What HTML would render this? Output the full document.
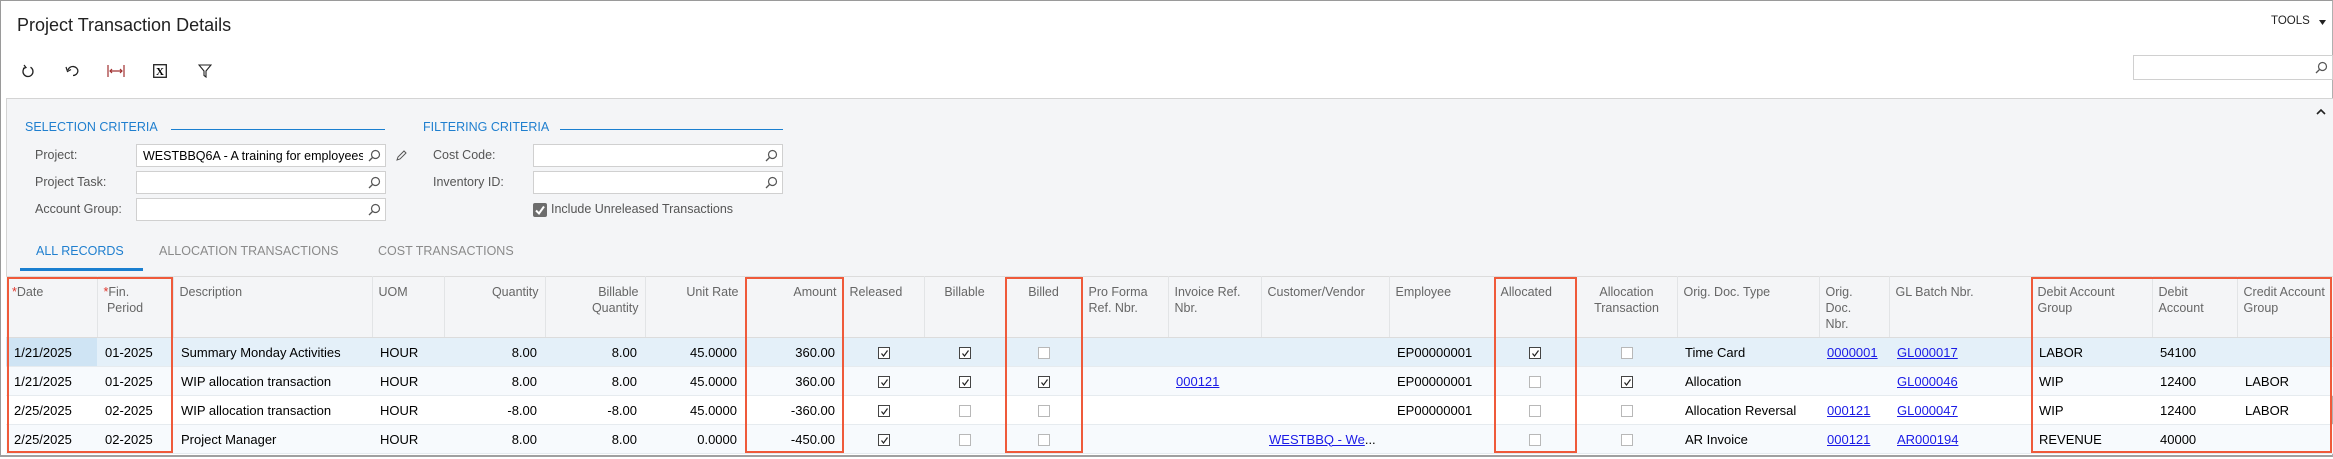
<!DOCTYPE html>
<html><head><meta charset="utf-8">
<style>
*{box-sizing:border-box;margin:0;padding:0}
body{width:2333px;height:459px;background:#fff;font-family:"Liberation Sans",Arial,sans-serif;font-size:13px;color:#000;position:relative;overflow:hidden}
.abs{position:absolute}
.frame{position:absolute;left:0;top:0;width:2333px;height:457px;border-left:1px solid #9a9a9a;border-top:1px solid #9a9a9a;border-bottom:2px solid #a0a0a0;border-right:1px solid #b0b0b0}
.title{left:17px;top:15px;font-size:18px;color:#222}
.tools{left:2271px;top:15px;font-size:11.5px;color:#222}
.panel{left:6px;top:98px;width:2327px;height:178px;background:#f4f5f7;border-top:1px solid #d4d4d4;border-left:1px solid #d4d4d4}
.sec{font-size:12.5px;color:#1f7fcf;top:120px}
.secline{height:1px;background:#1a7fd0;top:129px}
.lbl{color:#555;font-size:12.5px}
.inp{background:#fff;border:1px solid #d0d0d0;height:23px}
.inp .mg{position:absolute;right:4px;top:4px}
.tab{top:244px;font-size:12.5px;color:#8a8a8a}
table{position:absolute;left:6px;top:276px;border-collapse:collapse;table-layout:fixed;width:2327px}
th{height:61px;background:#f4f5f7;color:#666;font-weight:normal;font-size:12.5px;text-align:left;vertical-align:top;padding:7px 6px 0 6px;line-height:16px;border-right:1px solid #e2e4e6;border-top:1px solid #dcdcdc;border-bottom:1px solid #dcdcdc}
td{height:29px;padding:0 8px;white-space:nowrap;overflow:hidden;border-bottom:1px solid #e6ebef}
.r{text-align:right}
.c{text-align:center}
tr.sel td{background:#e4f0f9}
tr.sel td.d{background:#cfe4f4}
tr.alt td{background:#f7fafd}
a{color:#1a1ae6;text-decoration:underline}
.red{position:absolute;border:2px solid #ef5a3a;top:277px;height:176px}
.star{color:#e0352b}
.cb{display:inline-block;width:12px;height:12px;border:1px solid #b8b8b8;background:#fff;vertical-align:middle;position:relative}
.cb.on{border-color:#444}
.cb.on svg{position:absolute;left:1px;top:1px}
</style></head><body>
<div class="frame"></div>
<div class="abs title">Project Transaction Details</div>
<div class="abs tools">TOOLS</div>
<svg class="abs" style="left:2319px;top:20px" width="7" height="5" viewBox="0 0 7 5"><path d="M0 0 H7 L3.5 5 Z" fill="#222"/></svg>

<svg class="abs" style="left:21px;top:64px" width="14" height="15" viewBox="0 0 14 15"><path d="M4 3.5 A5 5 0 1 0 9.5 3.2" fill="none" stroke="#222" stroke-width="1.3"/><path d="M3 1 L5 3.6 L2 4.5" fill="none" stroke="#222" stroke-width="1.2"/></svg>
<svg class="abs" style="left:65px;top:65px" width="14" height="12" viewBox="0 0 14 12"><path d="M3 5 A5 4.5 0 1 1 8 10.5" fill="none" stroke="#222" stroke-width="1.3"/><path d="M1 2 L2.5 6.5 L6 4.5" fill="none" stroke="#222" stroke-width="1.2"/></svg>
<svg class="abs" style="left:107px;top:64px" width="18" height="14" viewBox="0 0 18 14"><path d="M1 1 V13 M17 1 V13 M3 7 H15 M5 5 L3 7 L5 9 M13 5 L15 7 L13 9" fill="none" stroke="#a03030" stroke-width="1.2"/></svg>
<svg class="abs" style="left:153px;top:64px" width="14" height="14" viewBox="0 0 14 14"><rect x="0.7" y="0.7" width="12.6" height="12.6" fill="#fff" stroke="#222" stroke-width="1.3"/><text x="7" y="11" font-family="Liberation Serif" font-weight="bold" font-size="11" text-anchor="middle">X</text></svg>
<svg class="abs" style="left:198px;top:64px" width="14" height="14" viewBox="0 0 14 14"><path d="M1 1 H13 L8 7 V13 L6 11.5 V7 Z" fill="none" stroke="#222" stroke-width="1.1"/></svg>

<div class="abs inp" style="left:2133px;top:55px;width:200px;height:25px"><svg class="mg" style="top:5px" width="13" height="13" viewBox="0 0 13 13"><circle cx="7.5" cy="5.5" r="4" fill="none" stroke="#555" stroke-width="1.2"/><path d="M4.5 8.5 L1 12" stroke="#555" stroke-width="1.3"/></svg></div>

<div class="abs panel"></div>
<svg class="abs" style="left:2316px;top:108px" width="10" height="7" viewBox="0 0 10 7"><path d="M1 6 L5 2 L9 6" fill="none" stroke="#222" stroke-width="1.6"/></svg>

<div class="abs sec" style="left:25px">SELECTION CRITERIA</div>
<div class="abs secline" style="left:171px;width:214px"></div>
<div class="abs sec" style="left:423px">FILTERING CRITERIA</div>
<div class="abs secline" style="left:560px;width:223px"></div>

<div class="abs lbl" style="left:35px;top:148px">Project:</div>
<div class="abs lbl" style="left:35px;top:175px">Project Task:</div>
<div class="abs lbl" style="left:35px;top:202px">Account Group:</div>
<div class="abs inp" style="left:136px;top:144px;width:250px"><span style="position:absolute;left:6px;top:4px;font-size:12.5px;width:220px;overflow:hidden;white-space:nowrap">WESTBBQ6A - A training for employees</span><svg class="mg" width="13" height="13" viewBox="0 0 13 13"><circle cx="7.5" cy="5.5" r="4" fill="none" stroke="#555" stroke-width="1.2"/><path d="M4.5 8.5 L1 12" stroke="#555" stroke-width="1.3"/></svg></div>
<div class="abs inp" style="left:136px;top:171px;width:250px"><svg class="mg" width="13" height="13" viewBox="0 0 13 13"><circle cx="7.5" cy="5.5" r="4" fill="none" stroke="#555" stroke-width="1.2"/><path d="M4.5 8.5 L1 12" stroke="#555" stroke-width="1.3"/></svg></div>
<div class="abs inp" style="left:136px;top:198px;width:250px"><svg class="mg" width="13" height="13" viewBox="0 0 13 13"><circle cx="7.5" cy="5.5" r="4" fill="none" stroke="#555" stroke-width="1.2"/><path d="M4.5 8.5 L1 12" stroke="#555" stroke-width="1.3"/></svg></div>
<svg class="abs" style="left:395px;top:150px" width="12" height="12" viewBox="0 0 12 12"><path d="M2 10 L3 7 L9 1 L11 3 L5 9 Z" fill="none" stroke="#555" stroke-width="1"/></svg>

<div class="abs lbl" style="left:433px;top:148px">Cost Code:</div>
<div class="abs lbl" style="left:433px;top:175px">Inventory ID:</div>
<div class="abs inp" style="left:533px;top:144px;width:250px"><svg class="mg" width="13" height="13" viewBox="0 0 13 13"><circle cx="7.5" cy="5.5" r="4" fill="none" stroke="#555" stroke-width="1.2"/><path d="M4.5 8.5 L1 12" stroke="#555" stroke-width="1.3"/></svg></div>
<div class="abs inp" style="left:533px;top:171px;width:250px"><svg class="mg" width="13" height="13" viewBox="0 0 13 13"><circle cx="7.5" cy="5.5" r="4" fill="none" stroke="#555" stroke-width="1.2"/><path d="M4.5 8.5 L1 12" stroke="#555" stroke-width="1.3"/></svg></div>
<svg class="abs" style="left:533px;top:203px" width="14" height="14" viewBox="0 0 14 14"><rect width="14" height="14" rx="2" fill="#6d6d6d"/><path d="M3 7.5 L6 10.5 L11 3.5" fill="none" stroke="#fff" stroke-width="2"/></svg>
<div class="abs lbl" style="left:551px;top:202px">Include Unreleased Transactions</div>

<div class="abs tab" style="left:36px;color:#1f7fcf">ALL RECORDS</div>
<div class="abs" style="left:20px;top:268px;width:123px;height:3px;background:#1a7fd0"></div>
<div class="abs tab" style="left:159px">ALLOCATION TRANSACTIONS</div>
<div class="abs tab" style="left:378px">COST TRANSACTIONS</div>

<table>
<colgroup>
<col style="width:91px"><col style="width:76px"><col style="width:199px"><col style="width:72px"><col style="width:101px"><col style="width:100px"><col style="width:100px"><col style="width:98px"><col style="width:81px"><col style="width:81px"><col style="width:77px"><col style="width:86px"><col style="width:93px"><col style="width:128px"><col style="width:105px"><col style="width:82px"><col style="width:101px"><col style="width:142px"><col style="width:70px"><col style="width:142px"><col style="width:121px"><col style="width:85px"><col style="width:96px">
</colgroup>
<tr>
<th><span class="star">*</span>Date</th><th><span class="star">*</span>Fin.<br>&nbsp;Period</th><th>Description</th><th>UOM</th><th class="r">Quantity</th><th class="r">Billable<br>Quantity</th><th class="r">Unit Rate</th><th class="r">Amount</th><th>Released</th><th class="c">Billable</th><th class="c">Billed</th><th>Pro Forma<br>Ref. Nbr.</th><th>Invoice Ref.<br>Nbr.</th><th>Customer/Vendor</th><th>Employee</th><th>Allocated</th><th class="c">Allocation<br>Transaction</th><th>Orig. Doc. Type</th><th>Orig.<br>Doc.<br>Nbr.</th><th>GL Batch Nbr.</th><th>Debit Account<br>Group</th><th>Debit<br>Account</th><th>Credit Account<br>Group</th>
</tr>
<tr class="sel">
<td class="d">1/21/2025</td><td>01-2025</td><td>Summary Monday Activities</td><td>HOUR</td><td class="r">8.00</td><td class="r">8.00</td><td class="r">45.0000</td><td class="r">360.00</td>
<td class="c"><span class="cb on"><svg width="9" height="9" viewBox="0 0 9 9"><path d="M1.5 4.5 L3.5 7 L7.5 1.5" fill="none" stroke="#222" stroke-width="1.2"/></svg></span></td>
<td class="c"><span class="cb on"><svg width="9" height="9" viewBox="0 0 9 9"><path d="M1.5 4.5 L3.5 7 L7.5 1.5" fill="none" stroke="#222" stroke-width="1.2"/></svg></span></td>
<td class="c"><span class="cb"></span></td><td></td><td></td><td></td><td>EP00000001</td>
<td class="c"><span class="cb on"><svg width="9" height="9" viewBox="0 0 9 9"><path d="M1.5 4.5 L3.5 7 L7.5 1.5" fill="none" stroke="#222" stroke-width="1.2"/></svg></span></td>
<td class="c"><span class="cb"></span></td><td>Time Card</td><td><a>0000001</a></td><td><a>GL000017</a></td><td>LABOR</td><td>54100</td><td></td>
</tr>
<tr class="alt">
<td class="d">1/21/2025</td><td>01-2025</td><td>WIP allocation transaction</td><td>HOUR</td><td class="r">8.00</td><td class="r">8.00</td><td class="r">45.0000</td><td class="r">360.00</td>
<td class="c"><span class="cb on"><svg width="9" height="9" viewBox="0 0 9 9"><path d="M1.5 4.5 L3.5 7 L7.5 1.5" fill="none" stroke="#222" stroke-width="1.2"/></svg></span></td>
<td class="c"><span class="cb on"><svg width="9" height="9" viewBox="0 0 9 9"><path d="M1.5 4.5 L3.5 7 L7.5 1.5" fill="none" stroke="#222" stroke-width="1.2"/></svg></span></td>
<td class="c"><span class="cb on"><svg width="9" height="9" viewBox="0 0 9 9"><path d="M1.5 4.5 L3.5 7 L7.5 1.5" fill="none" stroke="#222" stroke-width="1.2"/></svg></span></td>
<td></td><td><a>000121</a></td><td></td><td>EP00000001</td>
<td class="c"><span class="cb"></span></td>
<td class="c"><span class="cb on"><svg width="9" height="9" viewBox="0 0 9 9"><path d="M1.5 4.5 L3.5 7 L7.5 1.5" fill="none" stroke="#222" stroke-width="1.2"/></svg></span></td>
<td>Allocation</td><td></td><td><a>GL000046</a></td><td>WIP</td><td>12400</td><td>LABOR</td>
</tr>
<tr>
<td class="d">2/25/2025</td><td>02-2025</td><td>WIP allocation transaction</td><td>HOUR</td><td class="r">-8.00</td><td class="r">-8.00</td><td class="r">45.0000</td><td class="r">-360.00</td>
<td class="c"><span class="cb on"><svg width="9" height="9" viewBox="0 0 9 9"><path d="M1.5 4.5 L3.5 7 L7.5 1.5" fill="none" stroke="#222" stroke-width="1.2"/></svg></span></td>
<td class="c"><span class="cb"></span></td><td class="c"><span class="cb"></span></td><td></td><td></td><td></td><td>EP00000001</td>
<td class="c"><span class="cb"></span></td><td class="c"><span class="cb"></span></td>
<td>Allocation Reversal</td><td><a>000121</a></td><td><a>GL000047</a></td><td>WIP</td><td>12400</td><td>LABOR</td>
</tr>
<tr class="alt">
<td class="d">2/25/2025</td><td>02-2025</td><td>Project Manager</td><td>HOUR</td><td class="r">8.00</td><td class="r">8.00</td><td class="r">0.0000</td><td class="r">-450.00</td>
<td class="c"><span class="cb on"><svg width="9" height="9" viewBox="0 0 9 9"><path d="M1.5 4.5 L3.5 7 L7.5 1.5" fill="none" stroke="#222" stroke-width="1.2"/></svg></span></td>
<td class="c"><span class="cb"></span></td><td class="c"><span class="cb"></span></td><td></td><td></td><td><a>WESTBBQ - We</a>...</td><td></td>
<td class="c"><span class="cb"></span></td><td class="c"><span class="cb"></span></td>
<td>AR Invoice</td><td><a>000121</a></td><td><a>AR000194</a></td><td>REVENUE</td><td>40000</td><td></td>
</tr>
</table>

<div class="red" style="left:7px;width:166px"></div>
<div class="red" style="left:745px;width:99px"></div>
<div class="red" style="left:1005px;width:78px"></div>
<div class="red" style="left:1494px;width:83px"></div>
<div class="red" style="left:2031px;width:301px"></div>
</body></html>
